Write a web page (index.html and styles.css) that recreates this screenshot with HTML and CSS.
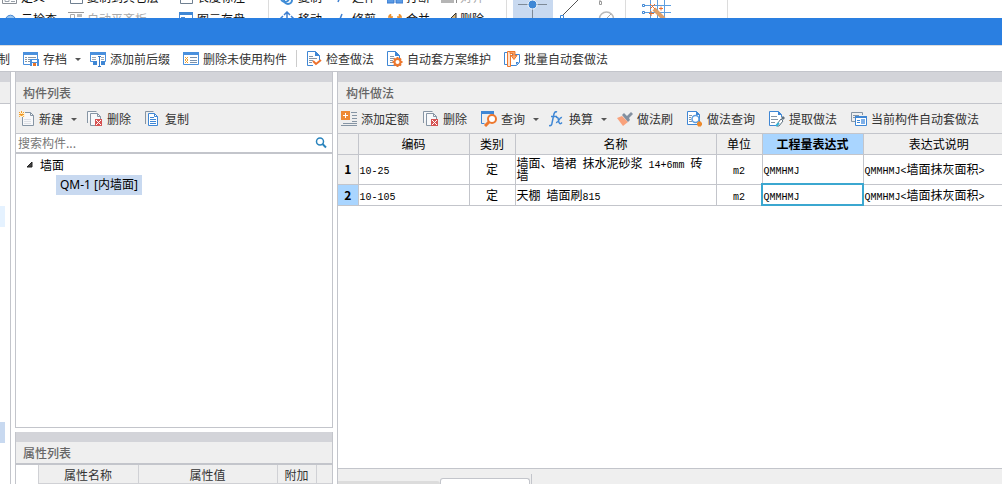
FILE: index.html
```html
<!DOCTYPE html>
<html lang="zh-CN">
<head>
<meta charset="utf-8">
<title>构件做法</title>
<link rel="stylesheet" href="styles.css">
</head>
<body>
<svg class="defs" width="0" height="0" aria-hidden="true">
  <symbol id="i-page" viewBox="0 0 16 16"><path d="M2.500 1.500h12v13h-12z" fill="#fff" stroke="#6f7f90"/></symbol>
  <symbol id="i-sheet" viewBox="0 0 16 16"><path d="M.5 1.500h14v13h-14z" fill="#fff" stroke="#8a8f96"/><path d="M3 9.500h4v3h-4zM9 10.500h4M9 12.500h4" fill="none" stroke="#9aa2ab"/></symbol>
  <symbol id="i-cloud" viewBox="0 0 16 16"><path d="M4 14a4 4 0 0 1 0-7a5 5 0 0 1 9 0a4 4 0 0 1 0 7z" fill="#9cc5ec" stroke="#4a8ad4"/></symbol>
  <symbol id="i-align" viewBox="0 0 16 16"><path d="M0 1.500h16" stroke="#999"/><path d="M2.500 3.500h4v10h-4z" fill="none" stroke="#aaa"/><path d="M9 3h5v3h-5z" fill="#bbb"/></symbol>
  <symbol id="i-form" viewBox="0 0 16 16"><path d="M1.500 2.500h13v12h-13z" fill="#fff" stroke="#4a8ad4"/><path d="M1 1h14v3h-14z" fill="#3f87d5"/><path d="M3 6.500h4" stroke="#4a8ad4"/></symbol>
  <symbol id="i-ring" viewBox="0 0 16 16"><circle cx="6" cy="9" r="4" fill="none" stroke="#3f8cd6" stroke-width="2"/><circle cx="9" cy="11" r="4" fill="none" stroke="#3f8cd6" stroke-width="2"/></symbol>
  <symbol id="i-move" viewBox="0 0 16 16"><path d="M8 1v14M5 4l3-3l3 3M2 10h12M4 5l-3 3l3 3M12 5l3 3l-3 3" fill="none" stroke="#3f7fd0" stroke-width="1.500"/></symbol>
  <symbol id="i-slash" viewBox="0 0 16 16"><path d="M9 3l-4 10" stroke="#3f7fd0" stroke-width="1.500"/></symbol>
  <symbol id="i-break" viewBox="0 0 16 16"><path d="M0 8h7v6h-7zM9 8h7v6h-7z" fill="#5a9be6" stroke="#3679cf"/></symbol>
  <symbol id="i-merge" viewBox="0 0 16 16"><path d="M1 6h5M3.500 3v6M2 4l3 4M10 6h5M12.500 3v6M14 4l-3 4" fill="none" stroke="#ec9130" stroke-width="1.500"/></symbol>
  <symbol id="i-block" viewBox="0 0 16 16"><path d="M0 5h13v9h-13z" fill="#b5b5b5"/><path d="M15.500 2v12" stroke="#888"/></symbol>
  <symbol id="i-pencil" viewBox="0 0 16 16"><path d="M15 2l-7 7h7z" fill="#d8b478" stroke="#333"/></symbol>

  <symbol id="i-save" viewBox="0 0 16 16"><path d="M.5 1.500h14v12h-14z" fill="#fff" stroke="#4a90dd"/><path d="M0 1h15v3h-15z" fill="#4a90dd"/><path d="M2 6.500h2M5 6.500h8M2 8.500h2M5 8.500h2M2 10.500h2M5 10.500h2" stroke="#8695a4"/><path d="M7 8h9v7h-9z" fill="#4a90dd"/><path d="M9 9h5v2h-5z" fill="#fff"/><path d="M9 12h5v3h-5z" fill="#fff"/><path d="M10 12h3v3h-3z" fill="#e8742a"/></symbol>
  <symbol id="i-prefix" viewBox="0 0 16 16"><path d="M3 10.500h-2.500v-9h15v9h-2" fill="#fff" stroke="#4a90dd"/><path d="M0 1h16v3h-16z" fill="#4a90dd"/><path d="M2 6.500h4M2 8.500h4M11 6.500h3M11 8.500h3" stroke="#a0a8b0"/><path d="M3 10h4v4h-4zM11 10h4v4h-4z" fill="#3f87d5"/><path d="M9.500 6v10M8 5.500h3M8 15.500h3" stroke="#3778c4"/></symbol>
  <symbol id="i-list" viewBox="0 0 16 16"><path d="M.5 1.500h15v12h-15z" fill="#fff" stroke="#4a90dd"/><path d="M0 1h16v3h-16z" fill="#4a90dd"/><path d="M7 6.500h7M7 9.500h7M7 11.500h7" stroke="#7890ac"/><path d="M2 6l3 3M5 6l-3 3M2 9l3 3M5 9l-3 3" stroke="#f0a02c"/></symbol>
  <symbol id="i-check" viewBox="0 0 16 16"><path d="M1.500 .5h8l4 4v10h-12z" fill="#fff" stroke="#3f87d5"/><path d="M9 0v5h5z" fill="#3f87d5"/><path d="M3 5.500h4M3 7.500h8M3 9.500h4M3 11.500h3" stroke="#8695a4"/><path d="M7 9h8v7h-8z" fill="#fff"/><path d="M7 10l3 3l5-4" fill="none" stroke="#ed702c" stroke-width="2"/></symbol>
  <symbol id="i-gear" viewBox="0 0 16 16"><path d="M.5 .5h8l4 4v10h-12z" fill="#fff" stroke="#3f87d5"/><path d="M8 0v5h5z" fill="#3f87d5"/><path d="M3 5.500h4M3 7.500h4M3 9.500h3M3 11.500h3" stroke="#8695a4"/><path d="M10.500 6v10M5.500 11h10M7 7.500l7 7M14 7.500l-7 7" stroke="#ed782e" stroke-width="2"/><circle cx="10.500" cy="11" r="3" fill="#fff" stroke="#ed782e" stroke-width="2"/></symbol>
  <symbol id="i-batch" viewBox="0 0 16 16"><path d="M3 1.500h-2.500v12h3M8 3.500h7.500v8l-3 3h-6" fill="#fff" stroke="#3f87d5"/><path d="M15 11l-3 3v-3z" fill="#3f87d5"/><path d="M6 .5h-2.500v15h3v-12" fill="#ffe1cc" stroke="#ed782e"/><path d="M6 .5h5v4h2l-3 4l-3-4h2v-2h-3z" fill="#f7a66f" stroke="#ed782e"/></symbol>
  <symbol id="i-new" viewBox="0 0 16 16"><path d="M3.500 1.500h8l3 3v10h-11z" fill="#f8f8fa" stroke="#8695a4"/><path d="M11.500 1.500v3h3" fill="none" stroke="#8695a4"/><path d="M5 8.500h7M5 10.500h7M5 12.500h7" stroke="#dde0e5"/><path d="M0 1h6v5h-6z" fill="#fff3d8"/><path d="M0 1l5 5M5 1l-5 5M2.500 0v6M0 3.500h6" stroke="#f39a25" stroke-dasharray="2 1"/></symbol>
  <symbol id="i-del" viewBox="0 0 16 16"><path d="M.5 12v-11.500h9M3.500 2.500h7l3 3v9h-10z" fill="#f7f8fa" stroke="#8695a4"/><path d="M10.500 2.500v3h3" fill="none" stroke="#8695a4"/><path d="M8 8h7v7h-7z" fill="#d65353"/><path d="M9 9l5 5M14 9l-5 5" stroke="#fff"/></symbol>
  <symbol id="i-copy" viewBox="0 0 16 16"><path d="M.5 13v-12.500h8" fill="none" stroke="#8695a4"/><path d="M3.500 2.500h6l3 3v9h-9z" fill="#fff" stroke="#3f87d5"/><path d="M9.500 2.500v3h3" fill="none" stroke="#3f87d5"/><path d="M5 6.500h4M5 8.500h6M5 10.500h6M5 12.500h6" stroke="#3f87d5"/></symbol>
  <symbol id="i-search" viewBox="0 0 16 16"><circle cx="7" cy="6.500" r="3.500" fill="#fff" stroke="#2a84bd" stroke-width="1.500"/><path d="M9.500 9l3.500 3.500" stroke="#2a84bd" stroke-width="2"/></symbol>
  <symbol id="i-add" viewBox="0 0 16 16"><path d="M10 1.500h6M11 4.500h5M11 7.500h5M11 10.500h5M2 12.500h14M0 14.500h16" stroke="#8695a4"/><path d="M0 0h9v9h-9z" fill="#ee8a35"/><path d="M2 4.500h5M4.500 2v5" stroke="#fff"/></symbol>
  <symbol id="i-query" viewBox="0 0 16 16"><path d="M.5 1.500v11h3M12.500 4v-2.500" fill="none" stroke="#3f87d5"/><path d="M0 0h13v3h-13z" fill="#3f87d5"/><circle cx="11" cy="8" r="4" fill="#fff" stroke="#ed782e" stroke-width="2"/><path d="M8 11l-4 4" stroke="#ed782e" stroke-width="3"/></symbol>
  <symbol id="i-fx" viewBox="0 0 16 16"><path d="M8 1c-2-1-3 1-3.500 4l-1.500 7c0 2-1 3-3 2.500M2 5.500h6M7 6.500c3-1 2 3 3 5s2 1 3 0M13 6.500c-3-1-3 6-6 5" fill="none" stroke="#3f87d5" stroke-width="1.500"/></symbol>
  <symbol id="i-brush" viewBox="0 0 16 16"><path d="M0 7l5-2l6 6l-5 4z" fill="#f9a27c"/><path d="M5 4l2-2l3 3l4-4l2 2l-4 4l1 2l-2 2z" fill="#8390a0"/></symbol>
  <symbol id="i-find" viewBox="0 0 16 16"><path d="M.5 .5h9l3 3v10h-12z" fill="#fff" stroke="#3f87d5"/><path d="M9 0v4h4z" fill="#3f87d5"/><path d="M2 4.500h3M2 6.500h2M2 8.500h2M2 10.500h3" stroke="#8695a4"/><circle cx="8.500" cy="8" r="3.500" fill="#fff" stroke="#5b9de0" stroke-width="1.500"/><path d="M10 13h5M12.500 10.500v5" stroke="#ed8a2c" stroke-width="3"/></symbol>
  <symbol id="i-pick" viewBox="0 0 16 16"><path d="M12.500 6v-2.500l-3-3h-9v14h7" fill="#fff" stroke="#3f87d5"/><path d="M9 0v4h4z" fill="#3f87d5"/><path d="M2 5.500h6M2 8.500h7M2 11.500h4" stroke="#8695a4"/><path d="M14 5l2 2l-2 2l-2-2z" fill="#5f7180"/><path d="M12 8l2 2l-4 5h-2v-2z" fill="#fff" stroke="#5f7180"/><path d="M7 15l3-3" stroke="#36b5d7" stroke-width="2"/></symbol>
  <symbol id="i-auto" viewBox="0 0 16 16"><path d="M11.500 4v-2.500h-11v9h4M2 4.500h6M2 6.500h2" fill="none" stroke="#8695a4"/><path d="M4.500 5.500h11v9h-11z" fill="#fff" stroke="#3f87d5"/><path d="M4 5h12v2h-12z" fill="#3f87d5"/><path d="M6 9.500h3M6 11.500h3" stroke="#3f87d5"/><path d="M10 8h4v5h-4z" fill="#7fb0e8"/></symbol>
</svg>

<header class="ribbon">
  <div class="ribbon-group file-group">
    <button class="cmd"><svg><use href="#i-sheet"/></svg>定义</button>
    <button class="cmd"><svg><use href="#i-page"/></svg>复制到其它层</button>
    <button class="cmd"><svg><use href="#i-page"/></svg>长度标注</button>
    <button class="cmd"><svg><use href="#i-cloud"/></svg>云检查</button>
    <button class="cmd muted"><svg><use href="#i-align"/></svg>自动平齐板</button>
    <button class="cmd"><svg><use href="#i-form"/></svg>图元存盘</button>
  </div>
  <div class="ribbon-group edit-group">
    <button class="cmd"><svg><use href="#i-ring"/></svg>复制</button>
    <button class="cmd"><svg><use href="#i-slash"/></svg>延伸</button>
    <button class="cmd"><svg><use href="#i-break"/></svg>打断</button>
    <button class="cmd muted"><svg><use href="#i-block"/></svg>对齐</button>
    <button class="cmd"><svg><use href="#i-move"/></svg>移动</button>
    <button class="cmd"><svg><use href="#i-slash"/></svg>修剪</button>
    <button class="cmd"><svg><use href="#i-merge"/></svg>合并</button>
    <button class="cmd"><svg><use href="#i-pencil"/></svg>删除</button>
  </div>
  <div class="ribbon-group draw-group">
    <button class="tool active" aria-label="点"><svg width="40" height="18"><path d="M5 4.500h29M19.500 4v14" stroke="#7d8997"/><circle cx="19.500" cy="4.500" r="4.500" fill="#3f87d5" stroke="#fff"/></svg></button>
    <button class="tool" aria-label="直线"><svg width="28" height="18"><path d="M10 15l16-16" stroke="#555"/><path d="M7.500 15.500h3v3h-3z" fill="#fff" stroke="#3f87d5"/></svg></button>
    <button class="tool" aria-label="圆"><svg width="34" height="18"><path d="M18.500 1.500h2v3h-2zM19 0v2" fill="#fff" stroke="#999"/><circle cx="25.500" cy="19" r="7" fill="none" stroke="#b9b9b9" stroke-width="1.500"/><path d="M25 19l5-5" stroke="#aaa"/></svg></button>
  </div>
  <div class="ribbon-group smart-group">
    <button class="tool" aria-label="智能布置"><svg width="30" height="18"><path d="M3 5.500h26M3 12.500h26M8.500 0v18M15.500 0v18M22.500 0v18" stroke="#5c9ee0"/><path d="M.5 4.500h2v2h-2zM.5 11.500h2v2h-2z" fill="#fff" stroke="#3f87d5"/><path d="M12 9l10 10" stroke="#dda06b" stroke-width="4"/><path d="M8 4l5 5M13 4l-5 5M9 11v5M7 13.500h5M17 8.500h4M19 6.500v4" stroke="#ed702c"/></svg></button>
  </div>
</header>

<div class="titlebar"></div>

<nav class="toolbar main-toolbar">
  <button class="btn">制</button>
  <button class="btn"><svg><use href="#i-save"/></svg>存档<span class="caret"></span></button>
  <button class="btn"><svg><use href="#i-prefix"/></svg>添加前后缀</button>
  <button class="btn"><svg><use href="#i-list"/></svg>删除未使用构件</button>
  <span class="divider"></span>
  <button class="btn"><svg><use href="#i-check"/></svg>检查做法</button>
  <button class="btn"><svg><use href="#i-gear"/></svg>自动套方案维护</button>
  <button class="btn"><svg><use href="#i-batch"/></svg>批量自动套做法</button>
</nav>

<main class="workspace">
  <aside class="nav-strip">
    <div class="grip"></div>
    <div class="panel-title"></div>
    <div class="strip-body">
      <div class="strip-hover"></div>
      <div class="strip-selected"></div>
    </div>
  </aside>

  <div class="sidebar">
    <section class="panel list-panel">
      <div class="grip"></div>
      <h2 class="panel-title">构件列表</h2>
      <div class="toolbar">
        <button class="btn"><svg><use href="#i-new"/></svg>新建<span class="caret"></span></button>
        <button class="btn"><svg><use href="#i-del"/></svg>删除</button>
        <button class="btn"><svg><use href="#i-copy"/></svg>复制</button>
      </div>
      <div class="search">
        <input type="text" placeholder="搜索构件..." aria-label="搜索构件">
        <button class="search-btn" aria-label="搜索"><svg><use href="#i-search"/></svg></button>
      </div>
      <ul class="tree">
        <li><span class="tree-row"><svg class="twisty" viewBox="0 0 8 8"><path d="M6 1v5h-5z" fill="#444" stroke="#222"/></svg>墙面</span>
          <ul><li><span class="tree-item">QM-1 [内墙面]</span></li></ul>
        </li>
      </ul>
    </section>
    <section class="panel prop-panel">
      <div class="grip"></div>
      <h2 class="panel-title">属性列表</h2>
      <table class="props">
        <colgroup><col class="p-no"><col class="p-name"><col class="p-value"><col class="p-extra"><col></colgroup>
        <thead><tr><td></td><th>属性名称</th><th>属性值</th><th>附加</th><th></th></tr></thead>
      </table>
    </section>
  </div>

  <section class="method">
    <div class="grip"></div>
    <h2 class="panel-title">构件做法</h2>
    <div class="toolbar">
      <button class="btn"><svg><use href="#i-add"/></svg>添加定额</button>
      <button class="btn"><svg><use href="#i-del"/></svg>删除</button>
      <button class="btn"><svg><use href="#i-query"/></svg>查询<span class="caret"></span></button>
      <button class="btn"><svg><use href="#i-fx"/></svg>换算<span class="caret"></span></button>
      <button class="btn"><svg><use href="#i-brush"/></svg>做法刷</button>
      <button class="btn"><svg><use href="#i-find"/></svg>做法查询</button>
      <button class="btn"><svg><use href="#i-pick"/></svg>提取做法</button>
      <button class="btn"><svg><use href="#i-auto"/></svg>当前构件自动套做法</button>
    </div>
    <div class="grid-area">
      <table class="grid">
        <colgroup><col class="c-no"><col class="c-code"><col class="c-type"><col class="c-name"><col class="c-unit"><col class="c-expr"><col></colgroup>
        <thead>
          <tr><th></th><th>编码</th><th>类别</th><th>名称</th><th>单位</th><th class="current">工程量表达式</th><th>表达式说明</th></tr>
        </thead>
        <tbody>
          <tr class="tall"><th>1</th><td><span class="mono">10-25</span></td><td class="mid">定</td><td>墙面、墙裙<span class="mono"> </span>抹水泥砂浆<span class="mono"> 14+6mm </span>砖墙</td><td class="mid"><span class="mono">m2</span></td><td><span class="mono">QMMHMJ</span></td><td><span class="mono">QMMHMJ&lt;</span>墙面抹灰面积<span class="mono">&gt;</span></td></tr>
          <tr><th class="current">2</th><td><span class="mono">10-105</span></td><td class="mid">定</td><td>天棚<span class="mono"> </span>墙面刷<span class="mono">815</span></td><td class="mid"><span class="mono">m2</span></td><td class="editing"><span class="mono">QMMHMJ</span></td><td><span class="mono">QMMHMJ&lt;</span>墙面抹灰面积<span class="mono">&gt;</span></td></tr>
        </tbody>
      </table>
    </div>
    <div class="tabs"><div class="tab"></div><div class="tab tab-on"></div><div class="tab-end"></div></div>
  </section>
</main>
</body>
</html>
```

FILE: styles.css
```css
* { box-sizing: border-box; }

body {
  margin: 0;
  height: 100vh;
  display: flex;
  flex-direction: column;
  overflow: hidden;
  background: #fff;
  color: #333;
  font: 12px/18px "Noto Sans CJK SC", sans-serif;
}

button {
  border: 0;
  padding: 0;
  background: none;
  color: inherit;
  font: inherit;
  white-space: nowrap;
}

svg { display: block; flex: none; }
.defs { position: absolute; }
ul { list-style: none; margin: 0; padding: 0; }

/* Ribbon */
.ribbon {
  flex: none;
  display: flex;
  height: 18px;
  overflow: hidden;
}
.ribbon-group { flex: none; display: flex; border-right: 1px solid #dcdcdc; }
.file-group,
.edit-group {
  display: grid;
  grid-auto-rows: 22px;
  margin-top: -14px;
  color: #111;
}
.file-group { grid-template-columns: 66px 110px 90px; padding-left: 2px; }
.edit-group { grid-template-columns: 54px 54px 54px 65px; padding-left: 10px; }
.cmd { display: flex; align-items: center; gap: 3px; }
.cmd svg { width: 16px; height: 16px; }
.muted { color: #aaa; }
.draw-group { padding: 0 10px 0 6px; }
.smart-group { padding: 0 55px 0 16px; }
.tool { display: flex; align-items: flex-start; }
.active { background: #c8d9f0; }

.titlebar { flex: none; height: 27px; background: #2a7fe1; }

/* Toolbars */
.toolbar {
  flex: none;
  display: flex;
  align-items: center;
  gap: 14px;
  height: 30px;
  padding: 0 3px;
  border-bottom: 1px solid #c3c5cb;
  background: #efefef;
}
.btn { flex: none; display: flex; align-items: center; gap: 4px; }
.btn svg { width: 16px; height: 16px; }
.caret {
  margin: 2px -4px 0 4px;
  border: 3px solid transparent;
  border-top-color: #555;
  border-bottom: 0;
}
.main-toolbar {
  height: 27px;
  gap: 13px;
  padding: 0;
  margin-left: -2px;
  border-top: 1px solid #ddd;
  background: #fff;
}
.divider { width: 1px; height: 17px; margin: 0 -4px; background: #ccc; }

/* Panels */
.workspace { flex: 1; min-height: 0; display: flex; gap: 4px; }
.grip { flex: none; height: 10px; background: #d3d4d9; }
.panel-title {
  flex: none;
  height: 22px;
  margin: 0;
  padding-left: 8px;
  border-bottom: 1px solid #c3c5cb;
  background: #efefef;
  color: #666;
  font-size: 12px;
  font-weight: 500;
  line-height: 21px;
}
.nav-strip {
  flex: none;
  width: 11px;
  display: flex;
  flex-direction: column;
  border-right: 1px solid #c3c5cb;
}
.strip-body { flex: 1; padding-top: 102px; }
.strip-hover { width: 5px; height: 21px; background: #e5f2ff; }
.strip-selected { width: 5px; height: 21px; margin-top: 195px; background: #c8d9f0; }

.sidebar {
  flex: none;
  width: 318px;
  display: flex;
  flex-direction: column;
  gap: 4px;
}
.panel {
  display: flex;
  flex-direction: column;
  border: 1px solid #c3c5cb;
  border-top: 0;
}
.panel .panel-title { padding-left: 7px; }
.list-panel { flex: 1; }
.prop-panel { flex: none; border-bottom: 0; }
.prop-panel .panel-title { height: 23px; border-bottom-width: 2px; }

.search {
  flex: none;
  display: flex;
  align-items: center;
  height: 20px;
  padding: 0 3px 0 2px;
  border-bottom: 2px solid #c3c5cb;
}
.search input {
  flex: 1;
  min-width: 0;
  border: 0;
  padding: 0;
  outline: 0;
  font: inherit;
  color: #333;
}
.search input::placeholder { color: #777; opacity: 1; }
.search-btn svg { width: 16px; height: 16px; }

.tree { color: #000; }
.tree-row { display: flex; align-items: center; gap: 6px; height: 21px; padding-left: 10px; }
.twisty { width: 8px; height: 8px; }
.tree-item {
  display: inline-block;
  margin-left: 40px;
  padding: 0 4px;
  background: #c8d9f0;
  font-family: "Noto Sans", "Noto Sans CJK SC", sans-serif;
  line-height: 20px;
}

table { border-collapse: collapse; table-layout: fixed; width: 100%; }
.props th {
  height: 19px;
  padding: 2px 0 0;
  border: 1px solid #d0d1d5;
  border-top: 0;
  background: #efefef;
  font-weight: 400;
  line-height: 16px;
}
.props th:last-child { border-right: 0; }
.props td { padding: 0; }
.p-no { width: 22px; }
.p-name { width: 100px; }
.p-value { width: 139px; }
.p-extra { width: 39px; }

/* Method grid */
.method {
  flex: 1;
  min-width: 0;
  display: flex;
  flex-direction: column;
  border-left: 1px solid #c3c5cb;
}
.grid-area { flex: 1; overflow: hidden; border-bottom: 1px solid #c3c5cb; }
.grid { width: calc(100% + 12px); color: #000; }
.grid th,
.grid td {
  height: 21px;
  padding: 0 1px;
  border: 1px solid #c3c5cb;
  border-top: 0;
  line-height: 12px;
  text-align: left;
}
.grid tr > :first-child { border-left: 0; }
.grid tr > :last-child { border-right: 0; }
.grid th { background: #efefef; text-align: center; font-weight: 400; }
.grid thead th { height: 20px; }
.grid tbody th { font-weight: 700; }
.grid .tall > * { height: 30px; }
.grid .mid { text-align: center; }
.grid .current { background: #a9d5ff; font-weight: 700; }
.grid .editing { outline: 2px solid #3ba7d0; outline-offset: -1px; }
.mono { font: 10px/0 "Liberation Mono", monospace; white-space: pre-wrap; }
.c-no { width: 20px; }
.c-code { width: 111px; }
.c-type { width: 46px; }
.c-name { width: 201px; }
.c-unit { width: 46px; }
.c-expr { width: 101px; }

.tabs {
  flex: none;
  display: flex;
  align-items: flex-end;
  height: 15px;
  background: #efefef;
}
.tab { width: 102px; height: 3px; border-top-right-radius: 3px; background: #dcdcdc; }
.tab-on {
  width: 90px;
  height: 6px;
  border: 1px solid #c3c5cb;
  border-bottom: 0;
  border-radius: 3px 3px 0 0;
  background: #fff;
}
.tab-end { width: 2px; height: 10px; border-right: 1px solid #c3c5cb; }
```
